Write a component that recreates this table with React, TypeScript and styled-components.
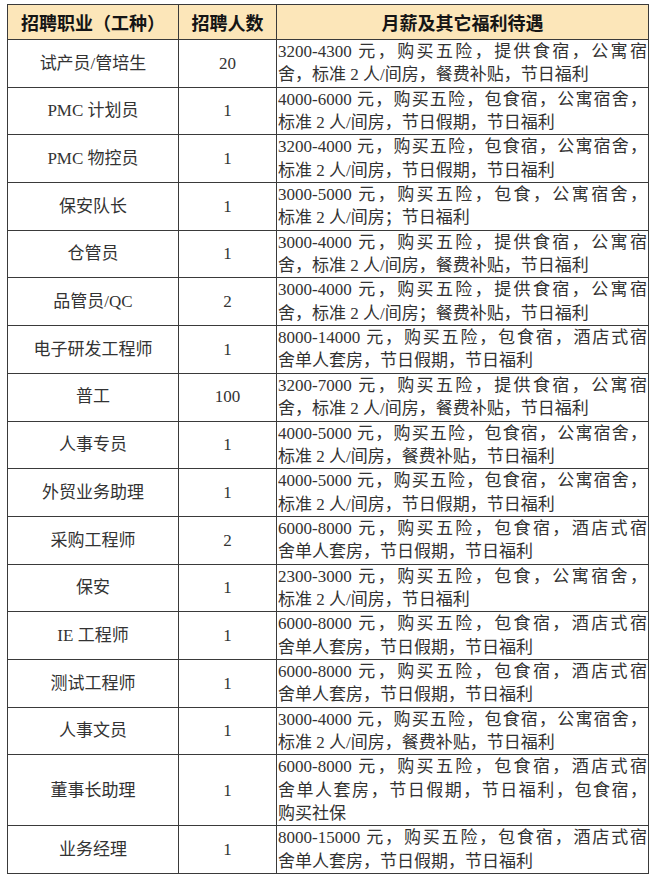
import React from "react";
import styled, { createGlobalStyle } from "styled-components";

const GlobalStyle = createGlobalStyle`
    body {
        margin: 0;
        background: #ffffff;
    }
`;

const Page = styled.div`
    padding: 4px 0 0 7px;
`;

const Table = styled.table`
    width: 638px;
    border-collapse: collapse;
    table-layout: fixed;
    font-family: "Liberation Serif", "Noto Sans CJK SC", serif;
    text-spacing-trim: space-all;
    color: #333333;
`;

const HeadCell = styled.th<{ $width: number }>`
    width: ${p => p.$width}px;
    height: 34px;
    padding: 0;
    background: #fce6b9;
    border: 1px solid #3a3a3a;
    font-family: "Noto Sans CJK SC", sans-serif;
    font-size: 18px;
    font-weight: 700;
    color: #151515;
    text-align: center;
    vertical-align: middle;
    line-height: 20px;
`;

const Cell = styled.td`
    padding: 0;
    border: 1px solid #3a3a3a;
    font-size: 17px;
    line-height: 23.35px;
    text-align: center;
    vertical-align: middle;
`;

const WelfareCell = styled(Cell)`
    padding: 0 1px;
    text-align: left;
`;

const Line = styled.div<{ $last: boolean }>`
    white-space: nowrap;
    text-align: ${p => (p.$last ? "left" : "justify")};
    text-align-last: ${p => (p.$last ? "left" : "justify")};
    text-justify: inter-character;
`;

type Job = {
    title: string;
    count: number;
    lines: string[];
};

const stdA = ["元，购买五险，提供食宿，公寓宿", "舍，标准 2 人/间房，餐费补贴，节日福利"];
const hotel = ["元，购买五险，包食宿，酒店式宿", "舍单人套房，节日假期，节日福利"];

const jobs: Job[] = [
    { title: "试产员/管培生", count: 20, lines: ["3200-4300 " + stdA[0], stdA[1]] },
    {
        title: "PMC 计划员",
        count: 1,
        lines: ["4000-6000 元，购买五险，包食宿，公寓宿舍，", "标准 2 人/间房，节日假期，节日福利"]
    },
    {
        title: "PMC 物控员",
        count: 1,
        lines: ["3200-4000 元，购买五险，包食宿，公寓宿舍，", "标准 2 人/间房，节日假期，节日福利"]
    },
    {
        title: "保安队长",
        count: 1,
        lines: ["3000-5000 元，购买五险，包食，公寓宿舍，", "标准 2 人/间房；节日福利"]
    },
    { title: "仓管员", count: 1, lines: ["3000-4000 " + stdA[0], stdA[1]] },
    {
        title: "品管员/QC",
        count: 2,
        lines: ["3000-4000 " + stdA[0], "舍，标准 2 人/间房；餐费补贴，节日福利"]
    },
    { title: "电子研发工程师", count: 1, lines: ["8000-14000 " + hotel[0], hotel[1]] },
    { title: "普工", count: 100, lines: ["3200-7000 " + stdA[0], stdA[1]] },
    {
        title: "人事专员",
        count: 1,
        lines: ["4000-5000 元，购买五险，包食宿，公寓宿舍，", "标准 2 人/间房，餐费补贴，节日福利"]
    },
    {
        title: "外贸业务助理",
        count: 1,
        lines: ["4000-5000 元，购买五险，包食宿，公寓宿舍，", "标准 2 人/间房，节日假期，节日福利"]
    },
    { title: "采购工程师", count: 2, lines: ["6000-8000 " + hotel[0], hotel[1]] },
    {
        title: "保安",
        count: 1,
        lines: ["2300-3000 元，购买五险，包食，公寓宿舍，", "标准 2 人/间房，节日福利"]
    },
    { title: "IE 工程师", count: 1, lines: ["6000-8000 " + hotel[0], hotel[1]] },
    { title: "测试工程师", count: 1, lines: ["6000-8000 " + hotel[0], hotel[1]] },
    {
        title: "人事文员",
        count: 1,
        lines: ["3000-4000 元，购买五险，包食宿，公寓宿舍，", "标准 2 人/间房，餐费补贴，节日福利"]
    },
    {
        title: "董事长助理",
        count: 1,
        lines: ["6000-8000 " + hotel[0], "舍单人套房，节日假期，节日福利，包食宿，", "购买社保"]
    },
    { title: "业务经理", count: 1, lines: ["8000-15000 " + hotel[0], hotel[1]] }
];

const App = () => {
    return (
        <Page>
            <GlobalStyle />
            <Table>
                <thead>
                    <tr>
                        <HeadCell $width={170}>招聘职业（工种）</HeadCell>
                        <HeadCell $width={97}>招聘人数</HeadCell>
                        <HeadCell $width={371}>月薪及其它福利待遇</HeadCell>
                    </tr>
                </thead>
                <tbody>
                    {jobs.map((job, i) => (
                        <tr key={i}>
                            <Cell>{job.title}</Cell>
                            <Cell>{job.count}</Cell>
                            <WelfareCell>
                                {job.lines.map((line, j) => (
                                    <Line key={j} $last={j === job.lines.length - 1}>
                                        {line}
                                    </Line>
                                ))}
                            </WelfareCell>
                        </tr>
                    ))}
                </tbody>
            </Table>
        </Page>
    );
};

export default App;
